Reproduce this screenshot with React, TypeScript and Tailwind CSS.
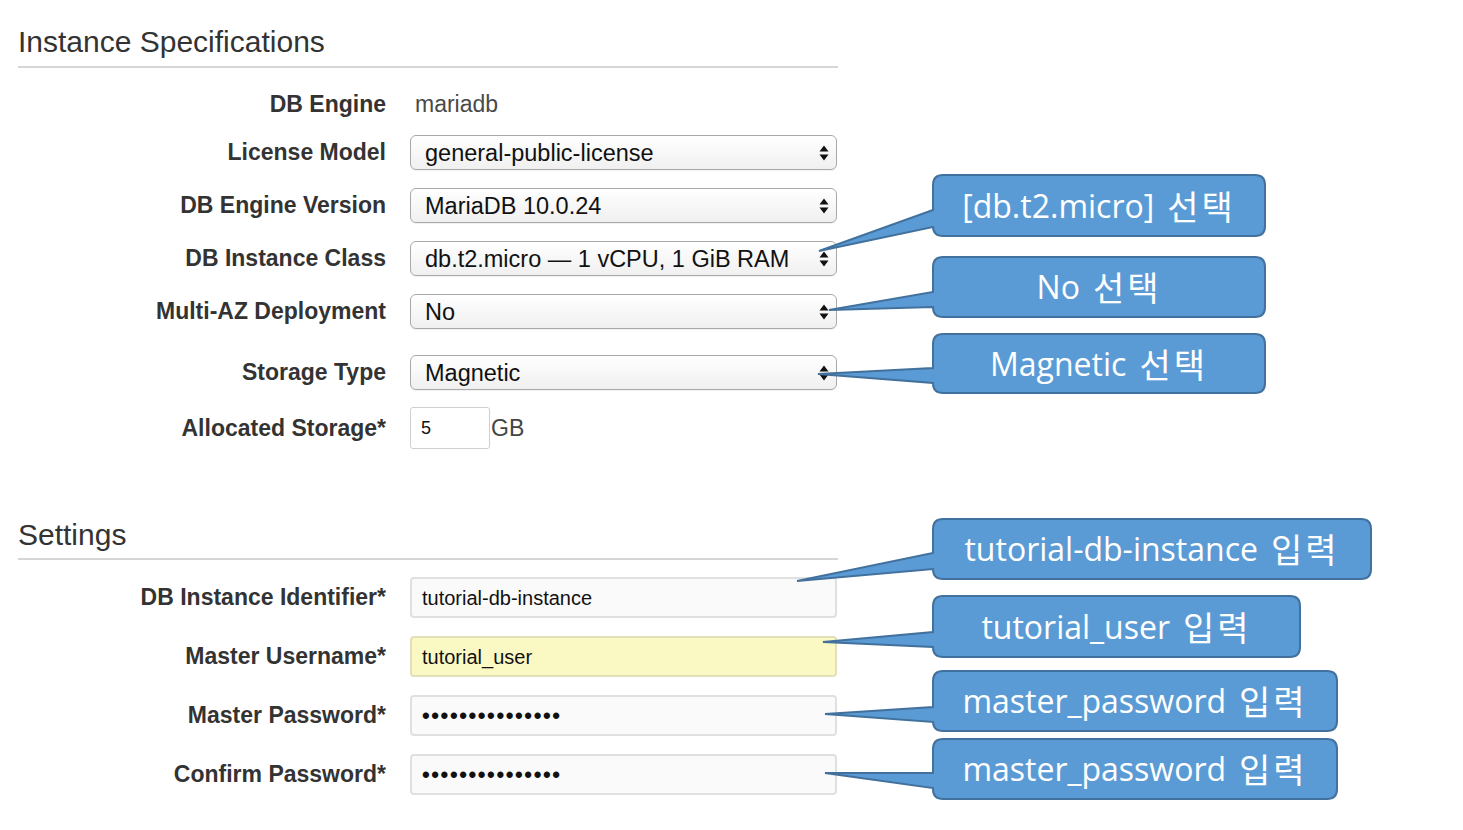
import React from "react";

type CalloutSpec = {
  x0: number; y0: number; x1: number; y1: number;
  yA: number; yB: number; tx: number; ty: number;
  latin: string; ko: string;
};

const callouts: CalloutSpec[] = [
  { x0: 933, y0: 175, x1: 1265, y1: 236, yA: 210, yB: 227, tx: 819, ty: 251, latin: "[db.t2.micro]", ko: "선택" },
  { x0: 933, y0: 257, x1: 1265, y1: 317, yA: 292, yB: 307, tx: 829, ty: 310, latin: "No", ko: "선택" },
  { x0: 933, y0: 334, x1: 1265, y1: 393, yA: 368, yB: 383, tx: 818, ty: 374, latin: "Magnetic", ko: "선택" },
  { x0: 933, y0: 519, x1: 1371, y1: 579, yA: 553, yB: 569, tx: 797, ty: 581, latin: "tutorial-db-instance", ko: "입력" },
  { x0: 933, y0: 596, x1: 1300, y1: 657, yA: 632, yB: 647, tx: 823, ty: 642, latin: "tutorial_user", ko: "입력" },
  { x0: 933, y0: 671, x1: 1337, y1: 731, yA: 707, yB: 722, tx: 825, ty: 714, latin: "master_password", ko: "입력" },
  { x0: 933, y0: 739, x1: 1337, y1: 799, yA: 773, yB: 788, tx: 825, ty: 773, latin: "master_password", ko: "입력" },
];

function calloutPath(c: CalloutSpec) {
  const r = 10;
  return [
    `M ${c.x0 + r} ${c.y0}`,
    `H ${c.x1 - r}`,
    `Q ${c.x1} ${c.y0} ${c.x1} ${c.y0 + r}`,
    `V ${c.y1 - r}`,
    `Q ${c.x1} ${c.y1} ${c.x1 - r} ${c.y1}`,
    `H ${c.x0 + r}`,
    `Q ${c.x0} ${c.y1} ${c.x0} ${c.y1 - r}`,
    `V ${c.yB}`,
    `L ${c.tx} ${c.ty}`,
    `L ${c.x0} ${c.yA}`,
    `V ${c.y0 + r}`,
    `Q ${c.x0} ${c.y0} ${c.x0 + r} ${c.y0}`,
    "Z",
  ].join(" ");
}

function Arrows() {
  return (
    <svg width="10" height="16" viewBox="0 0 10 16" className="absolute right-[7px] top-1/2 -translate-y-1/2">
      <polygon points="0.5,6.5 5,0.5 9.5,6.5" fill="#111" />
      <polygon points="0.5,9.5 5,15.5 9.5,9.5" fill="#111" />
    </svg>
  );
}

function Select({ value }: { value: string }) {
  return (
    <div className="relative flex items-center w-[427px] h-[35px] rounded-[6px] border border-[#a9a9a9] bg-linear-to-b from-[#ffffff] to-[#f0f0f0] pl-[14px] pt-[2px] text-[23.5px] text-[#111] shadow-[0_1px_1px_rgba(0,0,0,0.06)]">
      {value}
      <Arrows />
    </div>
  );
}

function TextInput({ value, yellow, dots }: { value: string; yellow?: boolean; dots?: boolean }) {
  return (
    <div
      className={
        yellow
          ? "flex items-center w-[427px] h-[41px] rounded-[4px] border-2 border-[#e2e0b8] bg-[#fbf9c3] pl-[10px] text-[20px] text-[#111]"
          : "flex items-center w-[427px] h-[41px] rounded-[4px] border-2 border-[#e0e0e0] bg-[#fafafa] pl-[10px] text-[20px] text-[#111]"
      }
    >
      {dots ? <span className="tracking-[1.6px] text-[22px] font-bold">{value}</span> : value}
    </div>
  );
}

function Row({ label, children, h, mt }: { label: string; children: React.ReactNode; h: string; mt: string }) {
  return (
    <div className={`flex items-center ${h} ${mt}`}>
      <div className="w-[368px] text-right font-bold text-[23px] text-[#333] whitespace-nowrap">{label}</div>
      <div className="ml-[24px] flex items-center">{children}</div>
    </div>
  );
}

export default function App() {
  const dots = "•••••••••••••••";
  return (
    <div className="relative w-[1463px] h-[830px] bg-white overflow-hidden font-['Liberation_Sans',Arial,sans-serif]">
      <div className="pl-[18px] pt-[27px] w-[838px]">
        <div className="h-[30px] leading-[30px] text-[30px] text-[#333] whitespace-nowrap">Instance Specifications</div>
        <div className="mt-[9px] h-[2px] bg-[#d6d6d6]" />

        <Row label="DB Engine" h="h-[35px]" mt="mt-[19px]">
          <span className="ml-[5px] text-[23px] text-[#4a4a4a]">mariadb</span>
        </Row>
        <Row label="License Model" h="h-[35px]" mt="mt-[13px]">
          <Select value="general-public-license" />
        </Row>
        <Row label="DB Engine Version" h="h-[35px]" mt="mt-[18px]">
          <Select value="MariaDB 10.0.24" />
        </Row>
        <Row label="DB Instance Class" h="h-[35px]" mt="mt-[18px]">
          <Select value="db.t2.micro — 1 vCPU, 1 GiB RAM" />
        </Row>
        <Row label="Multi-AZ Deployment" h="h-[35px]" mt="mt-[18px]">
          <Select value="No" />
        </Row>
        <Row label="Storage Type" h="h-[35px]" mt="mt-[26px]">
          <Select value="Magnetic" />
        </Row>
        <Row label="Allocated Storage*" h="h-[42px]" mt="mt-[17px]">
          <div className="flex items-center w-[80px] h-[42px] rounded-[3px] border border-[#cfcfcf] bg-white pl-[10px] text-[18px] text-[#111]">5</div>
          <span className="ml-[1px] text-[23px] text-[#444]">GB</span>
        </Row>

        <div className="mt-[71px] h-[30px] leading-[30px] text-[30px] text-[#333]">Settings</div>
        <div className="mt-[8px] h-[2px] bg-[#d6d6d6]" />

        <Row label="DB Instance Identifier*" h="h-[41px]" mt="mt-[17px]">
          <TextInput value="tutorial-db-instance" />
        </Row>
        <Row label="Master Username*" h="h-[41px]" mt="mt-[18px]">
          <TextInput value="tutorial_user" yellow />
        </Row>
        <Row label="Master Password*" h="h-[41px]" mt="mt-[18px]">
          <TextInput value={dots} dots />
        </Row>
        <Row label="Confirm Password*" h="h-[41px]" mt="mt-[18px]">
          <TextInput value={dots} dots />
        </Row>
      </div>

      <svg className="absolute left-0 top-0 pointer-events-none" width="1463" height="830" viewBox="0 0 1463 830">
        {callouts.map((c, i) => (
          <path key={i} d={calloutPath(c)} fill="#5b9bd5" stroke="#41719c" strokeWidth="2" strokeLinejoin="miter" />
        ))}
      </svg>

      {callouts.map((c, i) => (
        <div
          key={i}
          className="absolute flex items-center justify-center text-white text-[32px] whitespace-nowrap font-['Open_Sans','Noto_Sans_CJK_KR',sans-serif]"
          style={{ left: c.x0, top: c.y0, width: c.x1 - c.x0, height: c.y1 - c.y0 }}
        >
          <span>{c.latin}</span>
          <span className="ml-[13px] tracking-[3px] font-['Noto_Sans_CJK_KR',sans-serif] text-[34px] leading-none">{c.ko}</span>
        </div>
      ))}
    </div>
  );
}
